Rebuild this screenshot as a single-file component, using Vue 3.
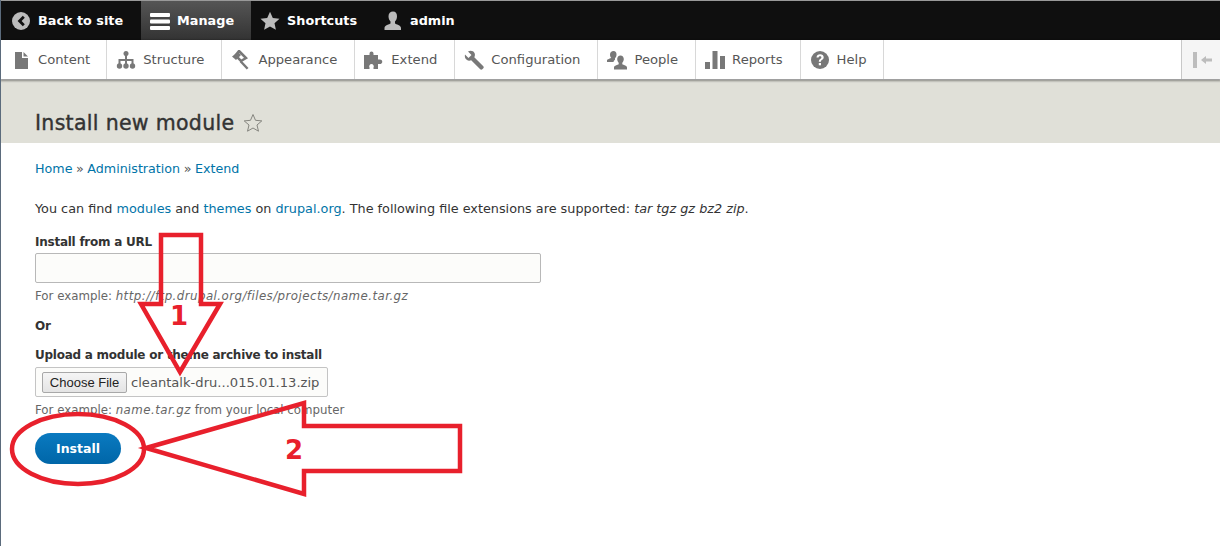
<template>
  <div class="page">
    <nav class="toolbar">
      <a class="tab" v-for="tab in tabs" :key="tab.label" :class="{ active: tab.active }">
        <svg class="tab-icon" viewBox="0 0 20 20" v-html="tab.icon"></svg>
        {{ tab.label }}
      </a>
    </nav>

    <div class="tray">
      <a class="tray-item" v-for="item in trayItems" :key="item.label">
        <svg class="tray-icon" viewBox="0 0 20 20" v-html="item.icon"></svg>
        {{ item.label }}
      </a>
      <div class="tray-toggle">
        <svg width="20" height="16" viewBox="0 0 20 16">
          <rect x="1" y="0" width="4" height="16" fill="#bdbdbd" />
          <path d="M9 8l5-4v2.500h6v3h-6V12z" fill="#bdbdbd" />
        </svg>
      </div>
    </div>

    <header class="page-head">
      <h1>Install new module</h1>
      <svg class="fav" width="20" height="20" viewBox="0 0 20 20">
        <path d="M10 1.500l2.500 5.800 6.300.6-4.800 4.100 1.500 6.200L10 15l-5.500 3.200L6 12 1.200 7.900l6.300-.6z" fill="none" stroke="#85857f" stroke-width="1" />
      </svg>
    </header>

    <main class="content">
      <div class="crumbs">
        <a>Home</a> » <a>Administration</a> » <a>Extend</a>
      </div>

      <p class="intro">
        You can find <a>modules</a> and <a>themes</a> on <a>drupal.org</a>. The following file extensions are supported: <em>tar tgz gz bz2 zip</em>.
      </p>

      <form class="install-form" @submit.prevent>
        <label>Install from a URL</label>
        <input class="url-input" type="text" />
        <div class="hint">For example: <em>http://ftp.drupal.org/files/projects/name.tar.gz</em></div>

        <div class="or">Or</div>

        <label>Upload a module or theme archive to install</label>
        <div class="file-box">
          <button type="button" class="file-btn">Choose File</button>
          <span class="file-name">cleantalk-dru...015.01.13.zip</span>
        </div>
        <div class="hint">For example: <em>name.tar.gz</em> from your local computer</div>

        <button type="submit" class="install-btn">Install</button>
      </form>
    </main>

    <svg class="notes" width="1220" height="546" viewBox="0 0 1220 546">
      <g fill="none" stroke="#e8202c" stroke-width="4.500">
        <path d="M161 235H201V304H220L180 372L141 304H161Z" stroke-linejoin="miter" />
        <path d="M146 448L304 403V426H460V471H304V494Z" stroke-linejoin="miter" />
        <ellipse cx="78" cy="449" rx="66" ry="35" />
      </g>
      <text x="179" y="325" class="note-num">1</text>
      <text x="294" y="459" class="note-num">2</text>
    </svg>
  </div>
</template>

<script setup>
const tabs = [
  {
    label: 'Back to site',
    icon: '<circle cx="10" cy="10" r="9" fill="#bbb"/><path d="M11.800 4.800l2 2L10.600 10l3.200 3.200-2 2L6.600 10z" fill="#111"/>',
  },
  {
    label: 'Manage',
    active: true,
    icon: '<rect x="0" y="2" width="20" height="4" rx="1" fill="#fff"/><rect x="0" y="8.500" width="20" height="4" rx="1" fill="#fff"/><rect x="0" y="15" width="20" height="4" rx="1" fill="#fff"/>',
  },
  {
    label: 'Shortcuts',
    icon: '<path d="M10 .8l2.800 6.200 6.700.7-5 4.500 1.400 6.600L10 15.500l-5.900 3.300 1.400-6.600-5-4.500 6.700-.7z" fill="#bbb"/>',
  },
  {
    label: 'admin',
    icon: '<path d="M10 .5c2.600 0 4 2 4 4.700 0 2.300-1 4.300-2 5.300v2c1 .8 6 1.800 6 4.500v2H1.500v-2c0-2.700 5-3.700 6-4.500v-2c-1-1-2-3-2-5.300C5.500 2.500 7.400.5 10 .5z" fill="#bbb"/>',
  },
];

const trayItems = [
  {
    label: 'Content',
    icon: '<path d="M4 2h7v6h6v11H4z" fill="#787878"/><path d="M12.500 2L17 6.500h-4.500z" fill="#787878"/>',
  },
  {
    label: 'Structure',
    icon: '<rect x="7.500" y="1" width="5" height="5" rx="2.500" fill="#787878"/><path d="M9 5h2v4h6.500v5h-2v-3H11v3H9v-3H4.500v3h-2V9H9z" fill="#787878"/><circle cx="3.500" cy="16" r="2.700" fill="#787878"/><circle cx="10" cy="16" r="2.700" fill="#787878"/><circle cx="16.500" cy="16" r="2.700" fill="#787878"/>',
  },
  {
    label: 'Appearance',
    icon: '<path d="M8 1l7 7-5 3-5.500-5.500z" fill="none" stroke="#787878" stroke-width="2.500"/><path d="M1 6.500L7 2l3 3-5 5z" fill="#787878"/><path d="M10.500 10.500l7 7.500-1.800 1.500-7-7.500z" fill="#787878"/>',
  },
  {
    label: 'Extend',
    icon: '<path d="M0 5h5.500V3.500a2 2 0 1 1 4 0V5H14v4.500h1.500a2.300 2.300 0 1 1 0 4.500H14v5H9.500v-1.500a2.300 2.300 0 1 0-4 0V19H0z" fill="#787878"/>',
  },
  {
    label: 'Configuration',
    icon: '<path d="M1 4.500l3.500 3.500 3-3L4 1.500C6.500.2 9.500.8 10.500 3c.7 1.500.5 3-.2 4.200l9 9c.6.700.6 1.500 0 2.100l-1 1c-.6.600-1.500.6-2.100 0l-9-9C5.800 11 4 11 2.700 9.800 1 8.500.5 6.500 1 4.500z" fill="#787878"/>',
  },
  {
    label: 'People',
    icon: '<path d="M6.500 1c2 0 3 1.500 3 3.400 0 1.600-.6 3-1.500 3.800v1.500c-.8.500-1.500 1.500-1.500 2.300H0v-1.500c0-1.500 3.500-2 4.500-2.800V8.200C3.600 7.400 3 6 3 4.400 3 2.500 4.500 1 6.500 1z" fill="#787878"/><path d="M13.500 5.500c2 0 3.300 1.600 3.300 3.500 0 1.500-.6 2.900-1.500 3.700v1.600c1 .8 4.700 1.200 4.700 3.200v2H7v-2c0-2 3.700-2.400 4.700-3.200v-1.600c-.9-.8-1.500-2.200-1.500-3.700 0-1.900 1.300-3.500 3.300-3.500z" fill="#787878"/>',
  },
  {
    label: 'Reports',
    icon: '<rect x="0" y="12" width="5" height="7" fill="#787878"/><rect x="7.500" y="1" width="5" height="18" fill="#787878"/><rect x="15" y="6" width="5" height="13" fill="#787878"/>',
  },
  {
    label: 'Help',
    icon: '<circle cx="10" cy="10" r="9" fill="#787878"/><path d="M6.500 7.500c.2-2 1.600-3.200 3.600-3.200 2.100 0 3.600 1.200 3.600 3 0 1.500-.9 2.200-1.800 2.800-.7.500-1 .8-1 1.700H8.800c0-1.500.4-2.200 1.400-2.900.8-.5 1.200-.9 1.200-1.500 0-.7-.5-1.100-1.300-1.100-.9 0-1.400.5-1.500 1.300z" fill="#fff"/><rect x="8.800" y="13" width="2.200" height="2.300" fill="#fff"/>',
  },
];
</script>

<style>
html, body {
  margin: 0;
  background: #fff;
}
</style>

<style scoped>
.page {
  position: relative;
  width: 1220px;
  height: 546px;
  overflow: hidden;
  font-family: "DejaVu Sans", Verdana, sans-serif;
  font-size: 13px;
  color: #333;
  box-sizing: border-box;
  border-left: 1px solid #5b6b7c;
}
a { color: #0074a8; }

.toolbar {
  display: flex;
  height: 39px;
  background: #0f0f0f;
  border-top: 1px solid #999;
}
.tab {
  display: flex;
  align-items: center;
  gap: 7px;
  padding: 0 17px 0 9px;
  color: #fff;
  font-weight: 700;
  font-size: 12.800px;
}
.tab:first-child { padding: 0 18px 0 10px; }
.tab.active {
  background: linear-gradient(#555, #333);
}
.tab-icon { width: 20px; height: 20px; flex: none; }

.tray {
  display: flex;
  height: 39px;
  background: #fff;
  box-shadow: 0 1px 2px 1px rgba(0, 0, 0, 0.4);
  position: relative;
}
.tray-item {
  display: flex;
  align-items: center;
  gap: 7px;
  padding: 0 17px 0 9px;
  font-size: 13.150px;
  color: #565656;
  border-right: 1px solid #d8d8d8;
}
.tray-item:first-child { padding: 0 16px 0 10px; }
.tray-icon { width: 20px; height: 20px; flex: none; }
.tray-toggle {
  margin-left: auto;
  width: 39px;
  background: #f5f5f5;
  border-left: 1px solid #c8c8c8;
  display: flex;
  align-items: center;
  padding-left: 10px;
  box-sizing: border-box;
}

.page-head {
  display: flex;
  align-items: center;
  gap: 9px;
  height: 63px;
  padding: 22px 0 0 34px;
  box-sizing: border-box;
  background: #e0e0d8;
  margin-top: 1px;
}
.page-head h1 {
  margin: 0;
  font-size: 20.500px;
  font-weight: 500;
  color: #333;
  letter-spacing: 0.3px;
  -webkit-text-stroke: 0.4px #333;
}
.fav { flex: none; }

.content { padding: 17px 0 0 34px; }
.crumbs { line-height: 18px; font-size: 12.700px; word-spacing: -0.500px; color: #555; }
.intro { margin: 22px 0 0; font-size: 12.800px; line-height: 18px; }

.install-form { display: flex; flex-direction: column; align-items: flex-start; margin-top: 16px; }
.install-form label {
  font-size: 12px;
  letter-spacing: -0.250px;
  font-weight: 700;
  line-height: 16px;
}
.url-input {
  width: 506px;
  height: 30px;
  margin-top: 3px;
  box-sizing: border-box;
  background: #fcfcfa;
  border: 1px solid #b8b8b8;
  border-radius: 2px;
}
.hint {
  margin-top: 5px;
  font-size: 11.800px;
  line-height: 16px;
  color: #666;
}
.hint em { letter-spacing: 0.450px; }
.or {
  margin: 14px 0 13px;
  font-weight: 700;
  font-size: 12px;
  letter-spacing: -0.250px;
  line-height: 16px;
}
.file-box {
  display: flex;
  align-items: center;
  gap: 4px;
  width: 293px;
  height: 30px;
  margin-top: 4px;
  padding-left: 6px;
  box-sizing: border-box;
  background: #fcfcfa;
  border: 1px solid #c4c4c4;
  border-radius: 2px;
}
.file-btn {
  width: 85px;
  height: 21px;
  padding: 0;
  box-sizing: border-box;
  font-family: "Liberation Sans", Arial, sans-serif;
  font-size: 13px;
  color: #222;
  background: linear-gradient(#f5f5f5, #e4e4e4);
  border: 1px solid #a8a8a8;
  border-radius: 2px;
}
.file-name { font-size: 13.100px; color: #555; white-space: nowrap; }
.install-btn {
  width: 86px;
  height: 31px;
  margin-top: 15px;
  padding: 0;
  font-family: inherit;
  font-size: 12.500px;
  font-weight: 700;
  color: #fff;
  background: linear-gradient(#0a7ac0, #0066a8);
  border: 0;
  border-radius: 16px;
}

.notes {
  position: absolute;
  left: -1px;
  top: 0;
  pointer-events: none;
}
.note-num {
  font-family: "DejaVu Sans", sans-serif;
  font-size: 26px;
  font-weight: 700;
  fill: #e8202c;
  text-anchor: middle;
}
</style>
